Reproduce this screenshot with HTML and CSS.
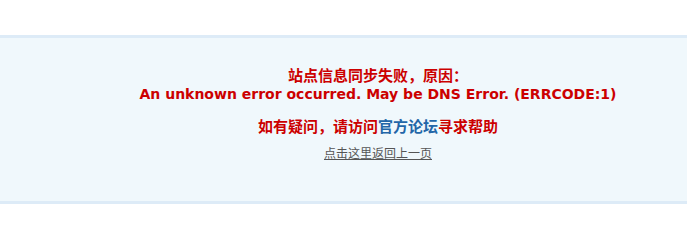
FILE: index.html
```html
<!DOCTYPE html>
<html>
<head>
<meta charset="utf-8">
<link rel="stylesheet" href="styles.css">
</head>
<body>
<div class="page">
  <div class="alert">
    <p class="msg">站点信息同步失败，原因：<br><span class="en">An unknown error occurred. May be DNS Error. (ERRCODE:1)</span></p>
    <p class="help">如有疑问，请访问<a class="forum" href="#">官方论坛</a>寻求帮助</p>
    <p class="back"><a href="#">点击这里返回上一页</a></p>
  </div>
</div>
</body>
</html>
```

FILE: styles.css
```css
html, body {
  margin: 0;
  padding: 0;
  background: #ffffff;
}
.page {
  padding-top: 35px;
}
.alert {
  background: #f0f8fc;
  border-top: 3px solid #ddebf7;
  border-bottom: 3px solid #ddebf7;
  height: 163px;
  padding-left: 69px;
  text-align: center;
  font-family: "DejaVu Sans", "Noto Sans CJK SC", sans-serif;
  color: #cc0000;
  font-weight: bold;
  font-size: 15px;
}
.msg {
  margin: 0;
  padding-top: 29px;
  line-height: 18px;
}
.en {
  font-size: 14px;
}
.help {
  margin: 15px 0 0;
  line-height: 18px;
}
.forum {
  color: #2366a8;
  text-decoration: none;
}
.back {
  margin: 10px 0 0;
  font-size: 12px;
  font-weight: normal;
  line-height: 16px;
}
.back a {
  color: #555555;
}
```
